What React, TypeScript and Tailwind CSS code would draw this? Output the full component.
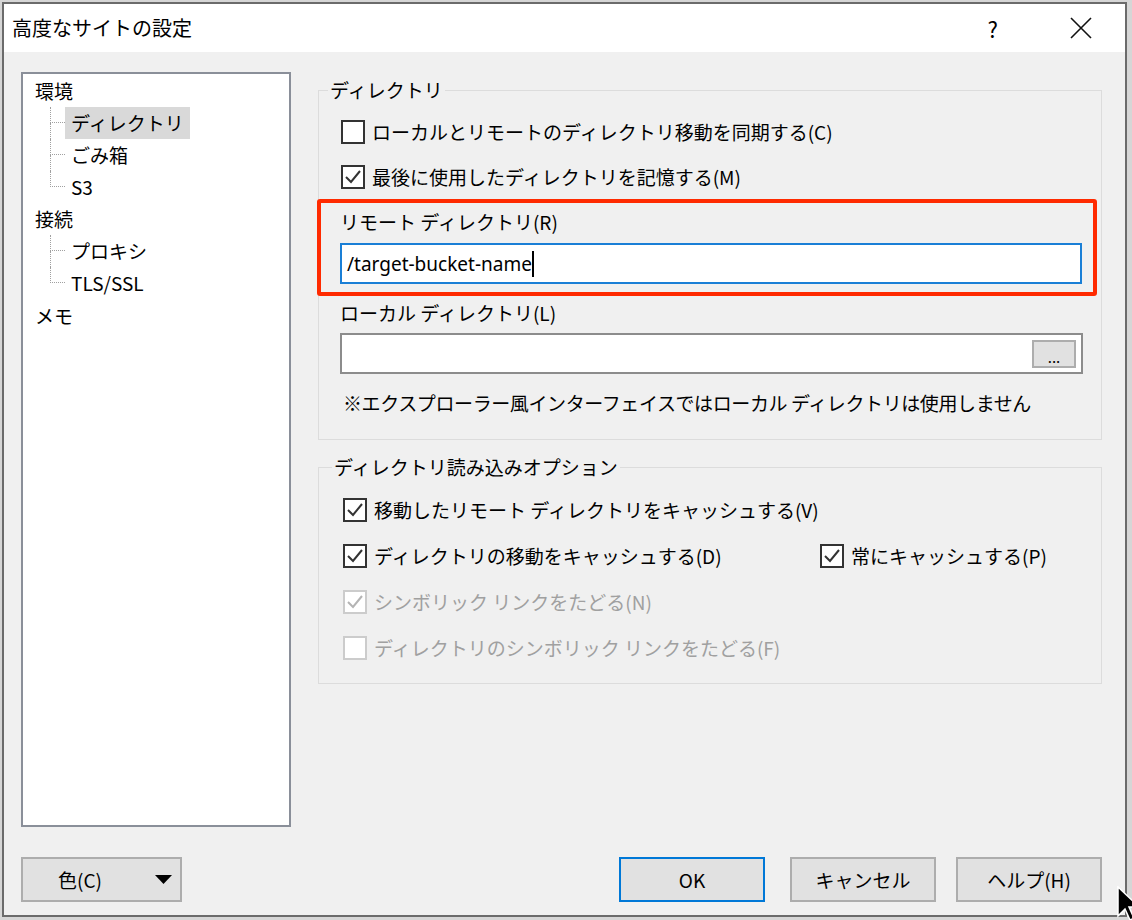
import React from "react";

// 高度なサイトの設定 ダイアログ (WinSCP 風)
const FONT = "font-['Noto_Sans_CJK_JP',sans-serif]";

function Check({ checked, disabled }: { checked?: boolean; disabled?: boolean }) {
  return (
    <span
      className={
        disabled
          ? "flex h-[24px] w-[24px] shrink-0 items-center justify-center border-2 border-[#cccccc] bg-white"
          : "flex h-[24px] w-[24px] shrink-0 items-center justify-center border-2 border-[#333333] bg-white"
      }
    >
      {checked && (
        <svg viewBox="0 0 20 20" className="h-[20px] w-[20px]">
          <path
            d="M3 10 L8 15 L17 4"
            fill="none"
            stroke={disabled ? "#b4b4b4" : "#333333"}
            strokeWidth="2"
          />
        </svg>
      )}
    </span>
  );
}

function CheckRow({
  label,
  checked,
  disabled,
}: {
  label: string;
  checked?: boolean;
  disabled?: boolean;
}) {
  return (
    <div className="flex h-[46px] items-center gap-[7px]">
      <Check checked={checked} disabled={disabled} />
      <span className={disabled ? "text-[#a0a0a0]" : "text-black"}>{label}</span>
    </div>
  );
}

function TreeChild({
  label,
  last,
  selected,
}: {
  label: string;
  last?: boolean;
  selected?: boolean;
}) {
  return (
    <div className="flex h-[32px]">
      <div className="flex w-[15px] flex-col">
        <div className="h-[16px] border-b border-l border-dotted border-[#a0a0a0]" />
        {!last && <div className="flex-1 border-l border-dotted border-[#a0a0a0]" />}
      </div>
      <span
        className={
          selected
            ? "flex h-full items-center bg-[#d9d9d9] px-[6px]"
            : "flex h-full items-center px-[6px]"
        }
      >
        {label}
      </span>
    </div>
  );
}

function Tree() {
  return (
    <div className="h-full w-[270px] border-2 border-[#8a8f99] bg-white pt-[1px]">
      <div className="flex h-[32px] items-center pl-[12px]">環境</div>
      <div className="ml-[27px]">
        <TreeChild label="ディレクトリ" selected />
        <TreeChild label="ごみ箱" />
        <TreeChild label="S3" last />
      </div>
      <div className="flex h-[32px] items-center pl-[12px]">接続</div>
      <div className="ml-[27px]">
        <TreeChild label="プロキシ" />
        <TreeChild label="TLS/SSL" last />
      </div>
      <div className="flex h-[34px] items-center pl-[12px]">メモ</div>
    </div>
  );
}

function Button({ label, primary }: { label: string; primary?: boolean }) {
  return (
    <div
      className={
        primary
          ? "flex h-full w-[146px] items-center justify-center border-2 border-[#0078d7] bg-[#e1e1e1]"
          : "flex h-full w-[146px] items-center justify-center border-2 border-[#adadad] bg-[#e1e1e1]"
      }
    >
      {label}
    </div>
  );
}

export default function App() {
  return (
    <div
      className={`relative h-[920px] w-[1132px] overflow-hidden bg-[#d6d6d6] pl-[2px] pt-[2px] ${FONT} text-[19px] leading-[24px] text-black`}
    >
      <div className="flex h-[915px] w-[1125px] flex-col border-2 border-[#6b6b6b]">
        {/* タイトルバー */}
        <div className="flex h-[48px] shrink-0 items-center bg-white pl-[8px]">
          <span className="text-[20px]">高度なサイトの設定</span>
          <span className="ml-auto text-[22px]">?</span>
          <svg viewBox="0 0 22 22" className="ml-[72px] mr-[33px] h-[22px] w-[22px]">
            <path d="M1 1 L21 21 M21 1 L1 21" stroke="#111" strokeWidth="1.6" />
          </svg>
        </div>

        {/* 本体 */}
        <div className="flex flex-1 flex-col bg-[#f0f0f0] pl-[17px] pr-[23px] pt-[20px]">
          <div className="flex h-[755px]">
            <Tree />

            <div className="ml-[27px] w-[784px]">
              <fieldset className="mt-[6px] min-w-0 border border-[#dcdcdc]">
                <legend className="ml-[9px] px-[2px] leading-[24px]">ディレクトリ</legend>
                <div className="pb-[7px] pl-[21px] pr-[18px] pt-[7px]">
                  <div className="ml-px">
                    <CheckRow label="ローカルとリモートのディレクトリ移動を同期する(C)" />
                  </div>
                  <div className="ml-px flex h-[44px] items-center gap-[7px]">
                    <Check checked />
                    <span>最後に使用したディレクトリを記憶する(M)</span>
                  </div>

                  <div className="-ml-[23px] -mr-[14px] h-[97px] rounded-[3px] border-4 border-[#ff2a00] pl-[19px] pr-[11px]">
                    <div className="flex h-[38px] items-center">リモート ディレクトリ(R)</div>
                    <div className="mt-[2px] flex h-[41px] items-center border-2 border-[#1a7fd6] bg-white pl-[5px]">
                      <span className="font-['Noto_Sans',sans-serif] text-[19px]">/target-bucket-name</span>
                      <span className="h-[26px] w-[2px] bg-black" />
                    </div>
                  </div>

                  <div className="flex h-[34px] items-center">ローカル ディレクトリ(L)</div>
                  <div className="mt-[3px] flex h-[41px] items-center justify-end border-2 border-[#8c8c8c] bg-white pr-[5px]">
                    <div className="flex h-[28px] w-[44px] items-end justify-center border-2 border-[#adadad] bg-[#e1e1e1] pb-[2px] text-[15px] leading-[15px]">
                      ...
                    </div>
                  </div>
                  <div className="flex h-[58px] items-center pl-[3px] tracking-[-0.4px]">
                    ※エクスプローラー風インターフェイスではローカル ディレクトリは使用しません
                  </div>
                </div>
              </fieldset>

              <fieldset className="mt-[15px] min-w-0 border border-[#dcdcdc]">
                <legend className="ml-[13px] px-[2px] leading-[24px]">ディレクトリ読み込みオプション</legend>
                <div className="pb-[12px] pl-[24px] pt-[8px]">
                  <CheckRow label="移動したリモート ディレクトリをキャッシュする(V)" checked />
                  <div className="flex">
                    <div className="w-[477px]">
                      <CheckRow label="ディレクトリの移動をキャッシュする(D)" checked />
                    </div>
                    <CheckRow label="常にキャッシュする(P)" checked />
                  </div>
                  <CheckRow label="シンボリック リンクをたどる(N)" checked disabled />
                  <CheckRow label="ディレクトリのシンボリック リンクをたどる(F)" disabled />
                </div>
              </fieldset>
            </div>
          </div>

          {/* ボタン */}
          <div className="mt-[30px] flex h-[45px]">
            <div className="flex h-full w-[161px] items-center border-2 border-[#adadad] bg-[#e1e1e1] pl-[35px] pr-[8px]">
              <span>色(C)</span>
              <svg viewBox="0 0 17 9" className="ml-auto h-[9px] w-[17px]">
                <polygon points="0,0 17,0 8.5,9" fill="#000" />
              </svg>
            </div>
            <div className="ml-auto h-full">
              <Button label="OK" primary />
            </div>
            <div className="ml-[25px] h-full">
              <Button label="キャンセル" />
            </div>
            <div className="ml-[20px] h-full">
              <Button label="ヘルプ(H)" />
            </div>
          </div>
        </div>
      </div>

      {/* マウスカーソル */}
      <svg viewBox="0 0 24 38" className="absolute left-[1117px] top-[886px] h-[38px] w-[24px]">
        <path d="M1 1 L1 30 L8 23 L13 34 L17 32 L12 21 L22 21 Z" fill="#000" stroke="#fff" strokeWidth="1.5" />
      </svg>
    </div>
  );
}
